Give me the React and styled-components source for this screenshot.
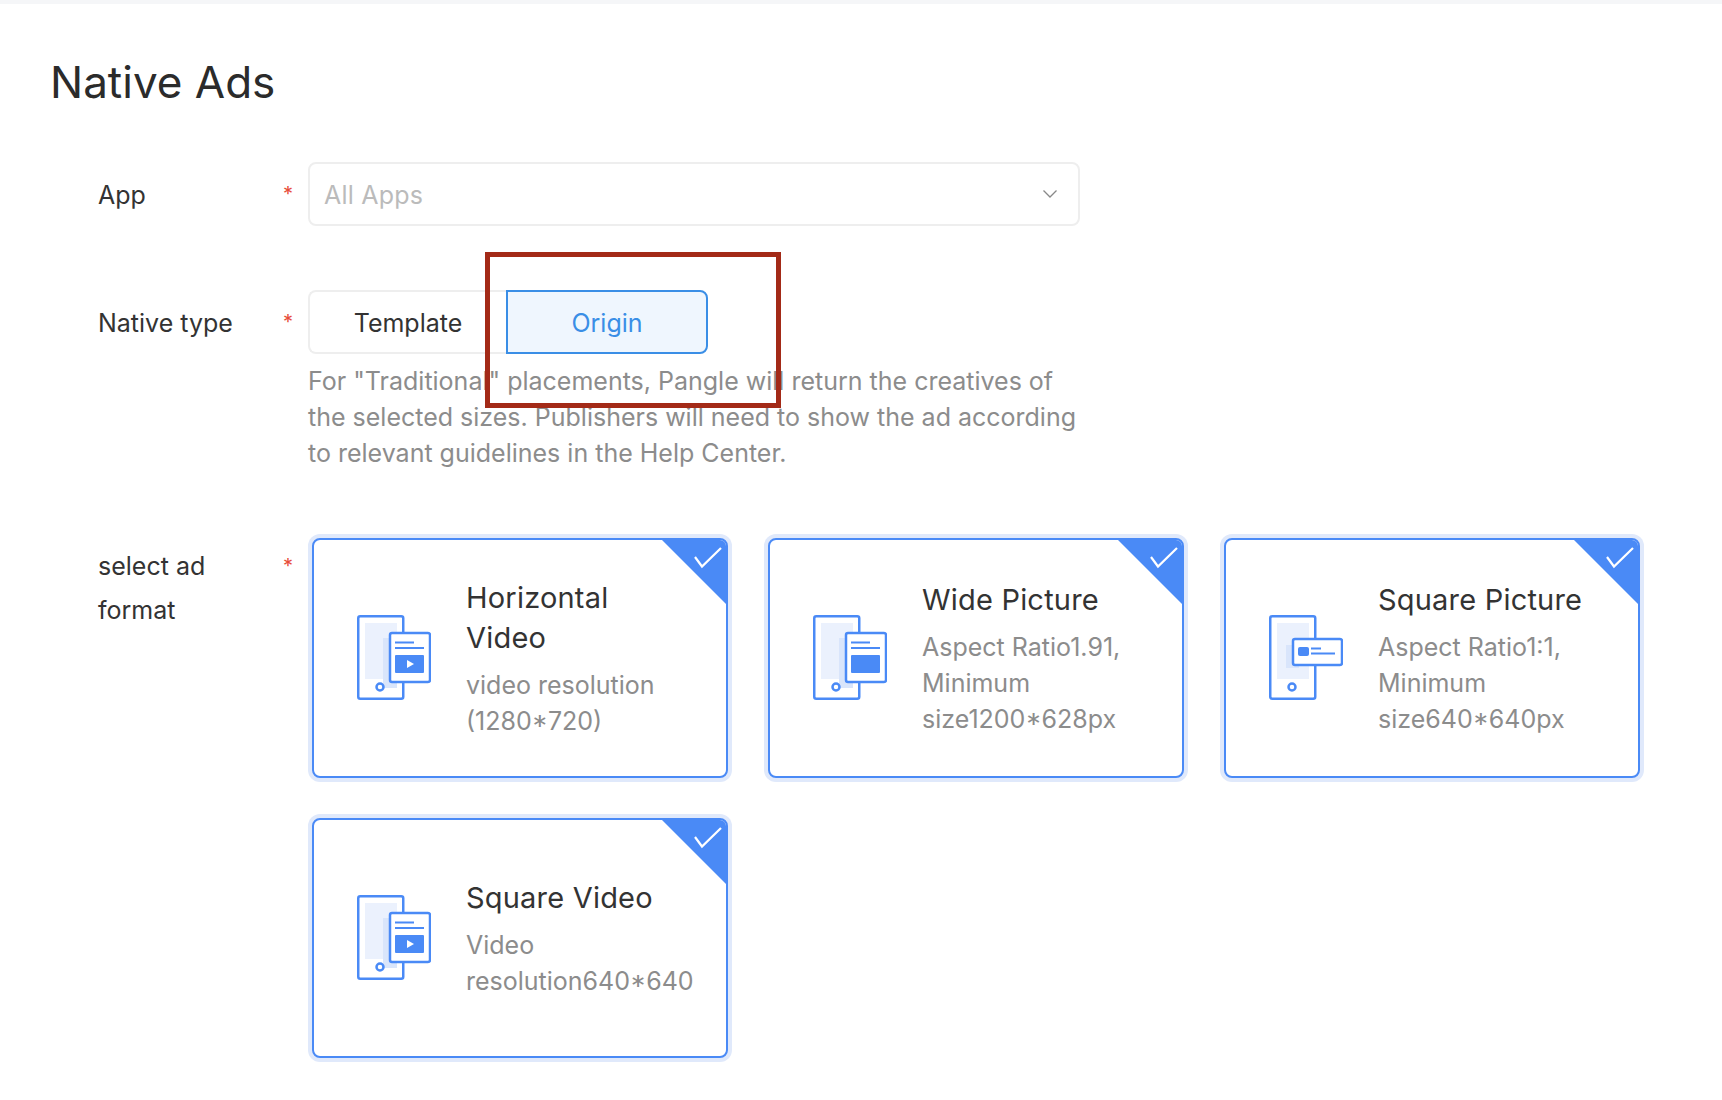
import React from 'react'
import styled, { createGlobalStyle } from 'styled-components'

const blue = '#4a8af6'

const formats = [
  { title: 'Horizontal Video', desc: 'video resolution (1280*720)', icon: 'video' },
  { title: 'Wide Picture', desc: 'Aspect Ratio1.91, Minimum size1200*628px', icon: 'wide' },
  { title: 'Square Picture', desc: 'Aspect Ratio1:1, Minimum size640*640px', icon: 'square' },
  { title: 'Square Video', desc: 'Video resolution640*640', icon: 'video' },
]

function FormatIcon({ type }) {
  const isSquare = type === 'square'
  return (
    <IconSvg viewBox="0 0 74 85" width="74" height="85">
      <rect x="8" y="8" width="32" height="56" fill="#ebf1fd" />
      {isSquare ? (
        <rect x="17" y="30" width="13" height="23" fill="#d9e5fb" />
      ) : (
        <rect x="26" y="23" width="14" height="50" fill="#d9e5fb" />
      )}
      <rect x="1.25" y="1.25" width="45" height="82.5" rx="2" fill="none" stroke={blue} strokeWidth="2.5" />
      <circle cx="23" cy="72" r="3.5" fill="none" stroke={blue} strokeWidth="2.5" />
      {isSquare ? (
        <g>
          <rect x="24" y="24" width="49" height="26" rx="2" fill="#fff" stroke={blue} strokeWidth="2.5" />
          <rect x="29" y="32" width="11" height="9" rx="2" fill={blue} />
          <path d="M42 33.5h10M42 38.5h24" stroke={blue} strokeWidth="2" fill="none" />
        </g>
      ) : (
        <g>
          <rect x="33" y="18" width="40" height="49" rx="2" fill="#fff" stroke={blue} strokeWidth="2.5" />
          <path d="M38 27.5h19M38 33h29" stroke={blue} strokeWidth="2" fill="none" />
          <rect x="38" y="40" width="29" height="18" rx="1" fill={blue} />
          {type === 'video' && <path d="M50 45l7 4-7 4z" fill="#fff" />}
        </g>
      )}
    </IconSvg>
  )
}

function App() {
  return (
    <Page>
      <GlobalStyle />
      <TopStrip />
      <Title>Native Ads</Title>
      <FormRow>
        <Label>App</Label>
        <Star>*</Star>
        <Select>
          <span>All Apps</span>
          <Chevron width="14" height="8" viewBox="0 0 14 8">
            <path d="M0.5 0.5L7 7L13.5 0.5" fill="none" stroke="#888" strokeWidth="1.3" />
          </Chevron>
        </Select>
      </FormRow>
      <FormRow $gap={64}>
        <Label>Native type</Label>
        <Star>*</Star>
        <div>
          <Segment>
            <TemplateBtn>Template</TemplateBtn>
            <OriginBtn>Origin</OriginBtn>
            <Highlight />
          </Segment>
          <Help>
            For "Traditional" placements, Pangle will return the creatives of the selected sizes.
            Publishers will need to show the ad according to relevant guidelines in the Help Center.
          </Help>
        </div>
      </FormRow>
      <FormRow $gap={67}>
        <FormatLabel>select ad format</FormatLabel>
        <FormatStar>*</FormatStar>
        <Cards>
          {formats.map((f, key) => (
            <Card key={key}>
              <Corner>
                <svg width="64" height="64" viewBox="0 0 64 64">
                  <path d="M0 0H64V64Z" fill={blue} />
                  <path d="M33 17l7 9.5L59 8" fill="none" stroke="#fff" strokeWidth="2.2" />
                </svg>
              </Corner>
              <FormatIcon type={f.icon} />
              <CardText>
                <CardTitle>{f.title}</CardTitle>
                <CardDesc>{f.desc}</CardDesc>
              </CardText>
            </Card>
          ))}
        </Cards>
      </FormRow>
    </Page>
  )
}

export default App

const GlobalStyle = createGlobalStyle`
  html, body {
    margin: 0;
    background: #fff;
  }
  * {
    box-sizing: border-box;
  }
`

const Page = styled.div`
  font-family: Inter, sans-serif;
  height: 1100px;
  overflow: hidden;
  color: #333;
`

const TopStrip = styled.div`
  height: 4px;
  background: #f5f6f8;
`

const Title = styled.h1`
  margin: 47px 0 0 50px;
  height: 62px;
  line-height: 62px;
  font-size: 44px;
  font-weight: 400;
  color: #2b2b2b;
`

const FormRow = styled.div`
  display: grid;
  grid-template-columns: 185px 25px 1fr;
  padding-left: 98px;
  margin-top: ${props => props.$gap || 49}px;
`

const Label = styled.div`
  font-size: 25px;
  line-height: 66px;
  height: 64px;
  color: #333;
`

const FormatLabel = styled(Label)`
  line-height: 44px;
  height: auto;
  padding-top: 6px;
  width: 130px;
`

const Star = styled.div`
  font-size: 20px;
  line-height: 64px;
  color: #e74c3c;
`

const FormatStar = styled(Star)`
  line-height: 56px;
`

const Select = styled.div`
  width: 772px;
  height: 64px;
  border: 2px solid #eee;
  border-radius: 8px;
  padding: 2px 21px 0 14px;
  display: flex;
  align-items: center;
  justify-content: space-between;
  font-size: 25px;
  letter-spacing: 0.2px;
  color: #bbb;
`

const Chevron = styled.svg`
  margin-top: -2px;
`

const Segment = styled.div`
  position: relative;
  display: flex;
  height: 64px;
`

const TemplateBtn = styled.div`
  width: 198px;
  padding-top: 2px;
  border: 2px solid #eee;
  border-right: none;
  border-radius: 8px 0 0 8px;
  display: flex;
  align-items: center;
  justify-content: center;
  font-size: 25px;
  color: #333;
`

const OriginBtn = styled.div`
  width: 202px;
  padding-top: 2px;
  border: 2px solid #3a8ee6;
  border-radius: 0 8px 8px 0;
  background: #eff6fe;
  display: flex;
  align-items: center;
  justify-content: center;
  font-size: 25px;
  color: #3a8ee6;
`

const Highlight = styled.div`
  position: absolute;
  left: 177px;
  top: -38px;
  width: 296px;
  height: 156px;
  border: 5px solid #a32a17;
`

const Help = styled.div`
  width: 780px;
  margin-top: 9px;
  font-size: 25px;
  line-height: 36px;
  color: #8c8c8c;
`

const Cards = styled.div`
  display: grid;
  grid-template-columns: repeat(3, 416px);
  column-gap: 40px;
  row-gap: 40px;
  margin-left: 4px;
`

const Card = styled.div`
  position: relative;
  height: 240px;
  border: 2px solid ${blue};
  border-radius: 8px;
  box-shadow: 0 0 0 4px #e0e9fb;
  padding-left: 43px;
  display: flex;
  align-items: center;
  overflow: hidden;
  background: #fff;
`

const Corner = styled.div`
  position: absolute;
  top: 0;
  right: 0;
  width: 64px;
  height: 64px;
  line-height: 0;
`

const IconSvg = styled.svg`
  flex: none;
  margin-right: 35px;
  margin-top: -1px;
`

const CardText = styled.div`
  width: 224px;
  padding-top: 1px;
`

const CardTitle = styled.div`
  font-size: 29px;
  line-height: 40px;
  letter-spacing: 0.2px;
  color: #333;
  margin-bottom: 9px;
`

const CardDesc = styled.div`
  font-size: 25px;
  line-height: 36px;
  color: #8c8c8c;
`
